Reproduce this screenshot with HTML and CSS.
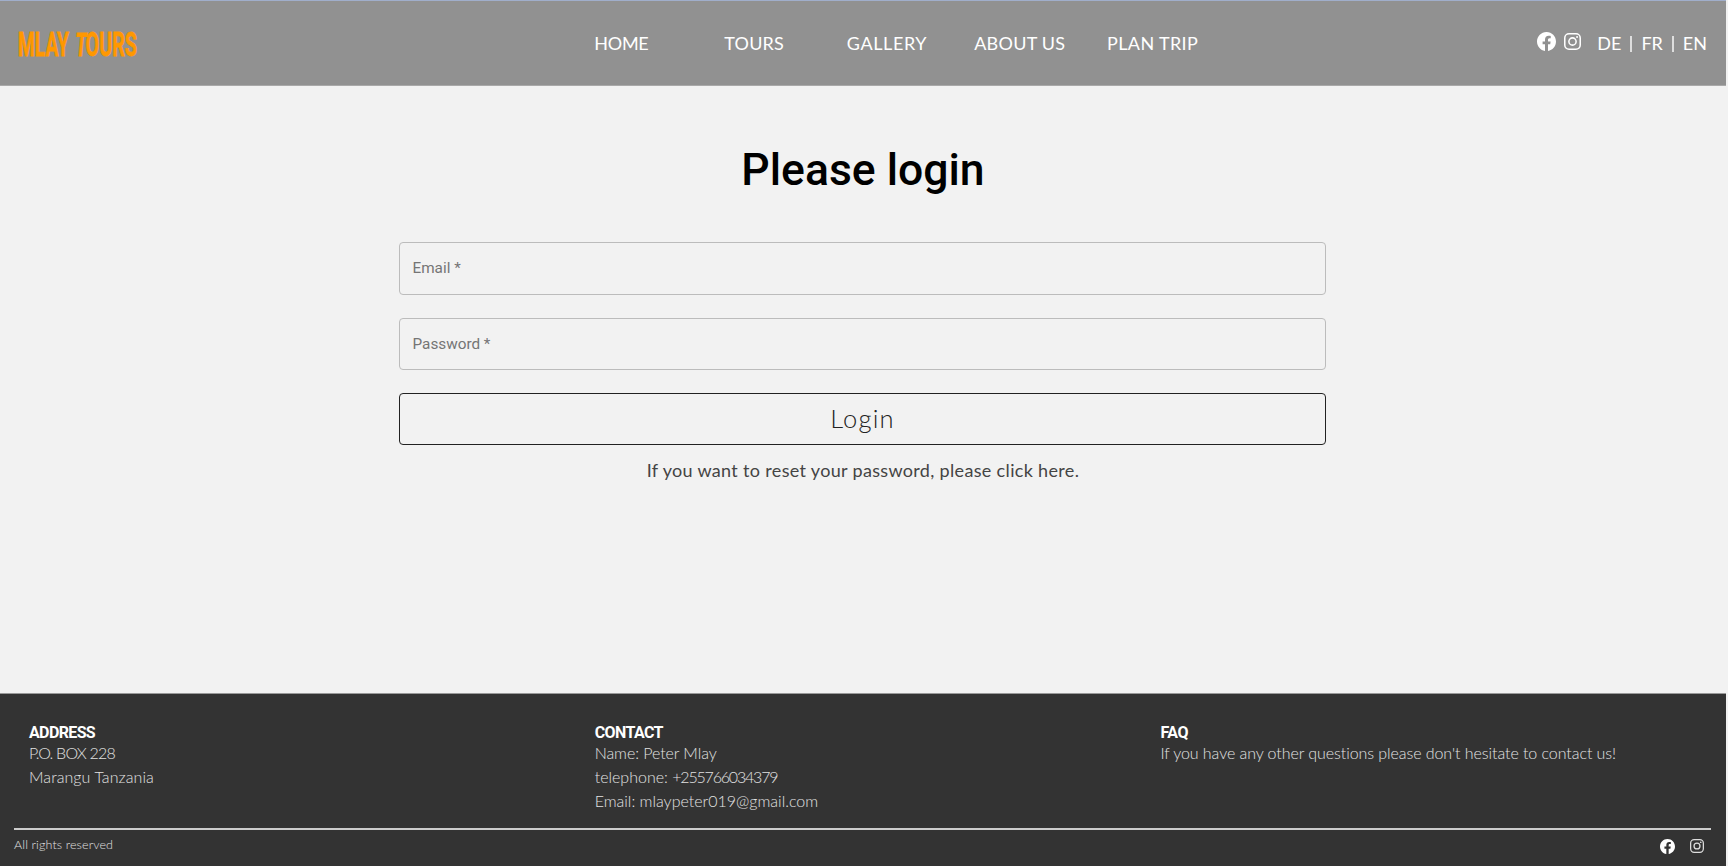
FILE: index.html
```html
<!DOCTYPE html>
<html lang="en">
<head>
<meta charset="utf-8">
<title>Mlay Tours</title>
<link rel="stylesheet" href="styles.css">
</head>
<body>
<svg class="sprite" aria-hidden="true">
  <symbol id="facebook" viewBox="0 0 16 16"><path d="M16 8.049c0-4.446-3.582-8.05-8-8.05C3.58 0-.002 3.603-.002 8.05c0 4.017 2.926 7.347 6.75 7.951v-5.625h-2.03V8.05H6.75V6.275c0-2.017 1.195-3.131 3.022-3.131.876 0 1.791.157 1.791.157v1.98h-1.009c-.993 0-1.303.621-1.303 1.258v1.51h2.218l-.354 2.326H9.25V16c3.824-.604 6.75-3.934 6.75-7.951z"/></symbol>
  <symbol id="instagram" viewBox="0 0 16 16"><g fill="none" stroke="currentColor" stroke-width="1.45"><rect x=".73" y=".73" width="14.54" height="14.54" rx="4"/><circle cx="8" cy="8" r="3.4"/></g><circle cx="12.3" cy="3.75" r=".96"/></symbol>
</svg>
<header class="header">
  <a class="brand">
    <svg width="124" height="42">
      <text x="2" y="33.5" textLength="51" lengthAdjust="spacingAndGlyphs">MLAY</text>
      <text transform="translate(58.5 33.5) skewX(-5)" textLength="11.5" lengthAdjust="spacingAndGlyphs">T</text>
      <text x="69.5" y="33.5" textLength="51.5" lengthAdjust="spacingAndGlyphs">OURS</text>
    </svg>
  </a>
  <nav class="nav">
    <a class="home">HOME</a>
    <a class="tours">TOURS</a>
    <a class="gallery">GALLERY</a>
    <a class="about">ABOUT US</a>
    <a class="plan">PLAN TRIP</a>
  </nav>
  <div class="tools">
    <svg class="icon fb"><use href="#facebook"/></svg>
    <svg class="icon ig"><use href="#instagram"/></svg>
    <div class="langs"><a>DE</a><i></i><a>FR</a><i></i><a>EN</a></div>
  </div>
</header>
<main class="main">
  <h1 class="title">Please login</h1>
  <form class="form">
    <label class="field">Email *</label>
    <label class="field">Password *</label>
    <button class="login" type="button">Login</button>
  </form>
  <p class="reset">If you want to reset your password, please click here.</p>
</main>
<footer class="footer">
  <div class="columns">
    <section>
      <h2 class="h-address">ADDRESS</h2>
      <p class="box">P.O. BOX 228</p>
      <p class="town">Marangu Tanzania</p>
    </section>
    <section>
      <h2 class="h-contact">CONTACT</h2>
      <p class="name">Name: Peter Mlay</p>
      <p>telephone: <span class="phone">+255766034379</span></p>
      <p>Email: mlaypeter019@gmail.com</p>
    </section>
    <section>
      <h2 class="h-faq">FAQ</h2>
      <p class="question">If you have any other questions please don't hesitate to contact us!</p>
    </section>
  </div>
  <div class="bottom">
    <span class="rights">All rights reserved</span>
    <div class="social">
      <svg class="icon"><use href="#facebook"/></svg>
      <svg class="icon ig"><use href="#instagram"/></svg>
    </div>
  </div>
</footer>
</body>
</html>
```
FILE: styles.css
```css
* { box-sizing: border-box; }
body {
  margin: 0;
  height: 866px;
  padding-right: 2px;
  display: flex;
  flex-direction: column;
  overflow: hidden;
  background: #f2f2f2;
  font-family: Lato, "Liberation Sans", sans-serif;
}
.sprite { display: none; }
.icon { fill: currentColor; display: block; }

.header {
  height: 86px;
  flex: none;
  display: grid;
  grid-template-columns: 555px 664px 1fr;
  align-items: center;
  background: #919191;
  border-top: 1px solid #a0aecb;
  border-bottom: 1px solid #a9a9a9;
  color: #fff;
  font-size: 18px;
}
.brand { padding-left: 16px; }
.brand svg { display: block; overflow: visible; fill: #ff9800; stroke: #ff9800; stroke-width: .8; font: 700 32.5px Roboto, sans-serif; }
.nav { display: grid; grid-template-columns: repeat(5, 1fr); text-align: center; line-height: 22px; }
.home { letter-spacing: -.3px; }
.tours { letter-spacing: .2px; }
.gallery { letter-spacing: .6px; }
.about { letter-spacing: .25px; }
.plan { letter-spacing: .35px; }
.tools { display: flex; align-items: center; justify-content: flex-end; padding-right: 19px; }
.tools .icon { width: 19px; height: 19px; margin: 0 8px 3px 0; }
.tools .ig { width: 17px; height: 17px; margin-right: 16px; }
.langs { display: flex; align-items: center; line-height: 22px; }
.langs i { width: 2px; height: 16px; background: #dedede; margin: 2px 9px 0 9px; }

.main { flex: 1; display: flex; flex-direction: column; align-items: center; }
.title { margin: 58px 0 45px; font: 500 44.5px/53px Roboto, sans-serif; color: #000; }
.form { width: 927px; margin-left: -1px; display: grid; gap: 23px; }
.field {
  height: 52.5px;
  border: 1px solid #bcbcbc;
  border-radius: 4px;
  padding: 0 12.5px;
  font: 400 15.3px/50px Roboto, sans-serif;
  color: #757575;
}
.login {
  height: 52px;
  border: 1px solid #222;
  border-radius: 4px;
  background: none;
  padding: 0 0 2px;
  font: 300 25.5px/48px Lato, sans-serif;
  letter-spacing: 1.2px;
  color: #222;
}
.reset { margin: 13px 0 0; font-size: 18px; line-height: 24px; letter-spacing: .33px; color: #444; }

.footer {
  height: 173px;
  flex: none;
  background: #333;
  border-top: 1px solid #999;
  padding: 29px 15px 0 14px;
  color: #e2e2e2;
}
.columns { display: grid; grid-template-columns: repeat(3, 565.7px); height: 105px; padding-left: 15px; }
.columns h2 { margin: 0 0 -2px; font: 700 16px/20px Roboto, sans-serif; color: #fff; }
.columns p { margin: 0; font-size: 16px; line-height: 24px; font-weight: 300; }
.columns .h-address { letter-spacing: -.63px; }
.columns .h-contact { letter-spacing: -.6px; }
.columns .h-faq { letter-spacing: -.4px; }
.box { letter-spacing: -.8px; }
.town { letter-spacing: .07px; }
.name { letter-spacing: -.07px; }
.phone { letter-spacing: -1.2px; }
.question { letter-spacing: -.065px; }
.bottom { border-top: 2px solid #ccc; display: flex; justify-content: space-between; }
.rights { font-size: 12.5px; font-weight: 300; line-height: 16px; margin-top: 7px; letter-spacing: .12px; }
.social { display: flex; gap: 15px; margin: 9px 7px 0 0; color: #fff; }
.social .icon { width: 15px; height: 15px; }
.social .ig { width: 14px; height: 14px; color: #ddd; }
```
